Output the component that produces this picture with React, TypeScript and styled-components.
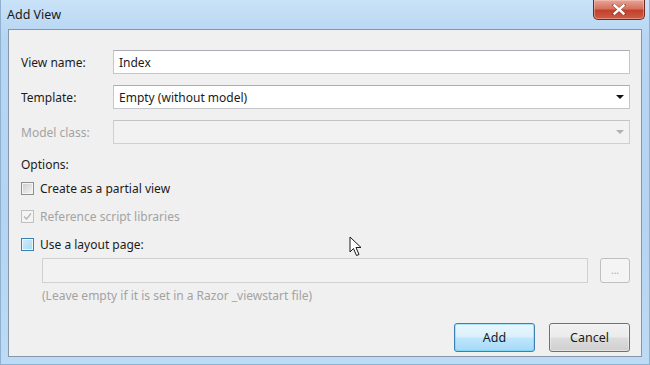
import React from "react";
import styled, { createGlobalStyle } from "styled-components";

const Global = createGlobalStyle`
  html, body { margin: 0; padding: 0; width: 650px; height: 365px; overflow: hidden; }
  body { font-family: "Noto Sans", "Open Sans", sans-serif; font-size: 12px; color: #1b1b1b; }
`;

const Window = styled.div`
  width: 650px;
  height: 365px;
  box-sizing: border-box;
  display: flex;
  flex-direction: column;
  padding: 0 7px 7px 7px;
  background: linear-gradient(180deg, #c9e2f7 0%, #b7d6f3 10%, #b4d4f2 60%, #bddbf5 100%);
  border-left: 1px solid #8fb0cf;
  border-right: 1px solid #8fb0cf;
  border-bottom: 1px solid #8fb0cf;
  position: relative;
`;

const TitleBar = styled.div`
  height: 29px;
  display: flex;
  align-items: flex-start;
  justify-content: space-between;
`;

const Title = styled.div`
  margin-top: 6px;
  margin-left: -1px;
  font-size: 12.5px;
  color: #1a1a1a;
`;

const CloseButton = styled.div`
  width: 52px;
  height: 20px;
  margin-right: -3px;
  box-sizing: border-box;
  border: 1px solid #6e2a22;
  border-top: none;
  border-radius: 0 0 5px 5px;
  background: linear-gradient(180deg, #e6a598 0%, #d7725f 45%, #c2412c 55%, #cf5c46 100%);
  display: flex;
  align-items: center;
  justify-content: center;
  box-shadow: inset 0 0 0 1px rgba(255, 220, 210, 0.4);
`;

const Client = styled.div`
  flex: 1;
  box-sizing: border-box;
  border: 1px solid #8596a8;
  background: #f0f0f0;
  padding: 20px 11px 4px 12px;
  display: flex;
  flex-direction: column;
`;

const FieldRow = styled.div`
  display: grid;
  grid-template-columns: 92px 1fr;
  align-items: center;
  margin-bottom: 11px;
`;

const Label = styled.div<{ $disabled?: boolean }>`
  color: ${(p) => (p.$disabled ? "#a3a3a3" : "#1b1b1b")};
`;

const TextBox = styled.div<{ $disabled?: boolean }>`
  height: 24px;
  box-sizing: border-box;
  border: 1px solid ${(p) => (p.$disabled ? "#cfcfcf" : "#c4c6ca")};
  border-top-color: ${(p) => (p.$disabled ? "#c4c4c4" : "#abadb3")};
  background: ${(p) => (p.$disabled ? "#f2f2f2" : "#ffffff")};
  display: flex;
  align-items: center;
  justify-content: space-between;
  padding: 0 5px 0 5px;
  color: #1b1b1b;
`;

const Arrow = styled.span<{ $disabled?: boolean }>`
  width: 0;
  height: 0;
  border-left: 4px solid transparent;
  border-right: 4px solid transparent;
  border-top: 4px solid ${(p) => (p.$disabled ? "#b0b0b0" : "#111")};
`;

const SectionLabel = styled.div`
  margin-top: 1px;
  margin-bottom: 8px;
`;

const CheckRow = styled.div<{ $disabled?: boolean }>`
  display: flex;
  align-items: center;
  gap: 6px;
  height: 15px;
  margin-bottom: 13px;
  color: ${(p) => (p.$disabled ? "#a3a3a3" : "#1b1b1b")};
`;

const Box = styled.span<{ $variant?: "normal" | "disabled" | "hot" }>`
  width: 13px;
  height: 13px;
  box-sizing: border-box;
  border: 1px solid
    ${(p) => (p.$variant === "hot" ? "#3c7fb1" : p.$variant === "disabled" ? "#c0c0c0" : "#8e8f8f")};
  background: ${(p) =>
    p.$variant === "hot"
      ? "linear-gradient(135deg, #cfeefc 0%, #a6d8f6 100%)"
      : p.$variant === "disabled"
      ? "#f4f4f4"
      : "linear-gradient(135deg, #cbcbcb 0%, #f6f6f6 100%)"};
  box-shadow: inset 0 0 0 1px ${(p) => (p.$variant === "hot" ? "#e6f6fd" : "#f4f4f4")};
  display: flex;
  align-items: center;
  justify-content: center;
`;

const LayoutBlock = styled.div`
  padding-left: 21px;
  margin-top: -7px;
  display: flex;
  flex-direction: column;
`;

const PathRow = styled.div`
  display: flex;
  gap: 12px;
  align-items: center;
`;

const PathBox = styled.div`
  flex: 1;
  height: 25px;
  box-sizing: border-box;
  border: 1px solid #d0d0d0;
  background: #f2f2f2;
`;

const SmallButton = styled.div`
  width: 30px;
  height: 25px;
  box-sizing: border-box;
  border: 1px solid #bfbfbf;
  border-radius: 3px;
  background: #f4f4f4;
  color: #a8a8a8;
  display: flex;
  align-items: center;
  justify-content: center;
  font-size: 10px;
  line-height: 1;
  padding-bottom: 2px;
`;

const Hint = styled.div`
  color: #a3a3a3;
  margin-top: 4px;
`;

const Footer = styled.div`
  margin-top: auto;
  display: flex;
  justify-content: flex-end;
  gap: 14px;
`;

const Button = styled.div<{ $primary?: boolean }>`
  width: 81px;
  height: 29px;
  box-sizing: border-box;
  border: 1px solid ${(p) => (p.$primary ? "#3c7fb1" : "#707070")};
  border-radius: 3px;
  background: ${(p) =>
    p.$primary
      ? "linear-gradient(180deg, #eaf6fd 0%, #d9f0fc 48%, #bee6fd 52%, #a7d9f5 100%)"
      : "linear-gradient(180deg, #f2f2f2 0%, #ebebeb 48%, #dddddd 52%, #cfcfcf 100%)"};
  box-shadow: inset 0 0 0 1px ${(p) => (p.$primary ? "#48cff8" : "#fcfcfc")}66;
  display: flex;
  align-items: center;
  justify-content: center;
  color: #1b1b1b;
  font-size: 12.5px;
`;

const Cursor = styled.svg`
  position: absolute;
  left: 348px;
  top: 236px;
`;

export default function App() {
  return (
    <>
      <Global />
      <Window>
        <TitleBar>
          <Title>Add View</Title>
          <CloseButton>
            <svg width="14" height="11" viewBox="0 0 14 11">
              <path d="M2 1 L12 10 M12 1 L2 10" stroke="#5a1e16" strokeWidth="3.4" strokeLinecap="square" opacity="0.5" />
              <path d="M2.5 1.5 L11.5 9.5 M11.5 1.5 L2.5 9.5" stroke="#ffffff" strokeWidth="2.4" strokeLinecap="square" />
            </svg>
          </CloseButton>
        </TitleBar>
        <Client>
          <FieldRow>
            <Label>View name:</Label>
            <TextBox>Index</TextBox>
          </FieldRow>
          <FieldRow>
            <Label>Template:</Label>
            <TextBox>
              Empty (without model)
              <Arrow />
            </TextBox>
          </FieldRow>
          <FieldRow>
            <Label $disabled>Model class:</Label>
            <TextBox $disabled>
              <span />
              <Arrow $disabled />
            </TextBox>
          </FieldRow>
          <SectionLabel>Options:</SectionLabel>
          <CheckRow>
            <Box $variant="normal" />
            Create as a partial view
          </CheckRow>
          <CheckRow $disabled>
            <Box $variant="disabled">
              <svg width="9" height="9" viewBox="0 0 9 9">
                <path d="M1 4.5 L3.5 7 L8 1.5" stroke="#b5b5b5" strokeWidth="1.3" fill="none" />
              </svg>
            </Box>
            Reference script libraries
          </CheckRow>
          <CheckRow>
            <Box $variant="hot" />
            Use a layout page:
          </CheckRow>
          <LayoutBlock>
            <PathRow>
              <PathBox />
              <SmallButton>...</SmallButton>
            </PathRow>
            <Hint>(Leave empty if it is set in a Razor _viewstart file)</Hint>
          </LayoutBlock>
          <Footer>
            <Button $primary>Add</Button>
            <Button>Cancel</Button>
          </Footer>
        </Client>
        <Cursor width="14" height="22" viewBox="0 0 14 22">
          <path d="M1 1 L1 16 L4.5 12.5 L7.5 19.5 L10 18.5 L7 11.5 L12 11.5 Z" fill="#ffffff" stroke="#1a1a1a" strokeWidth="1" strokeLinejoin="round" />
        </Cursor>
      </Window>
    </>
  );
}
